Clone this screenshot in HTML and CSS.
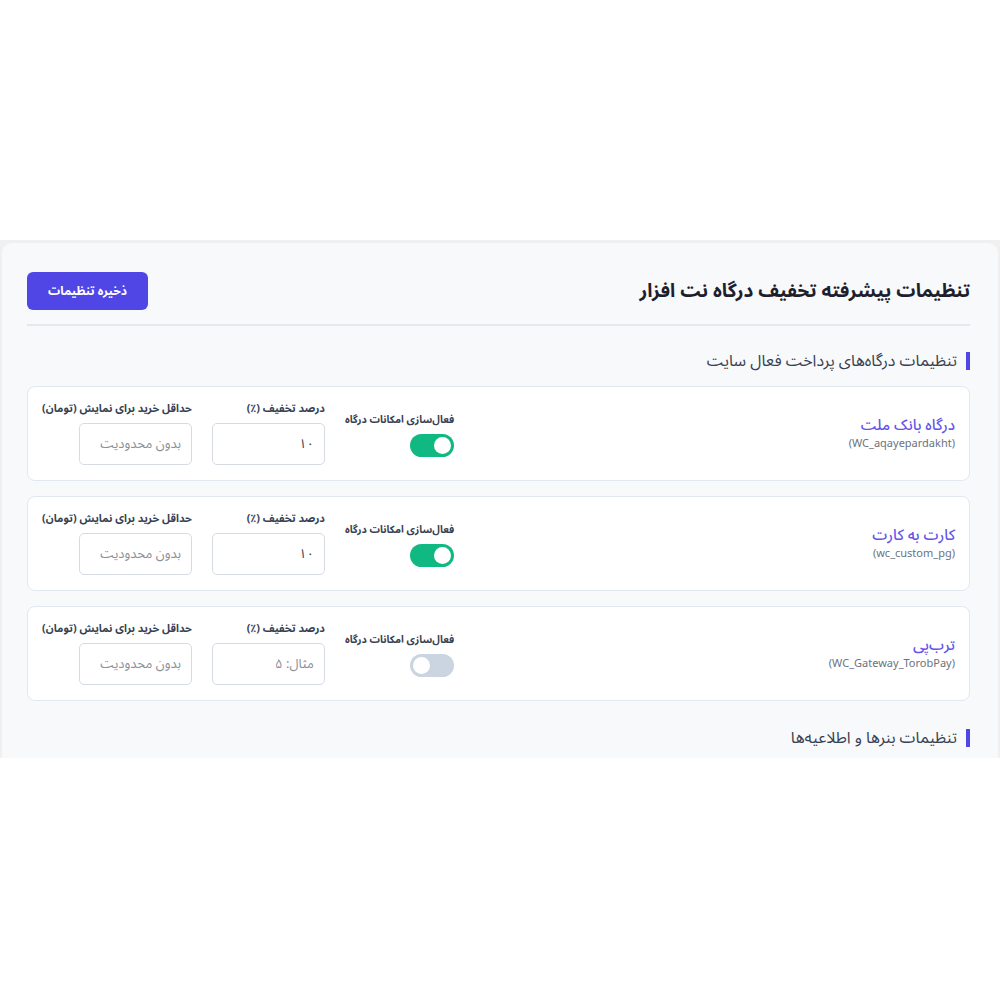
FILE: index.html
```html
<!DOCTYPE html>
<html lang="fa" dir="rtl">
  <head>
    <meta charset="UTF-8" />
    <meta name="viewport" content="width=device-width, initial-scale=1.0" />
    <title>تنظیمات پیشرفته تخفیف درگاه</title>
    <link rel="stylesheet" href="styles.css">
  </head>
  <body>
    <div class="settings-wrap">
      <div class="settings-panel">
        <div class="panel-header">
          <h1 class="panel-title">تنظیمات پیشرفته تخفیف درگاه نت افزار</h1>
          <button class="btn-save" type="button">ذخیره تنظیمات</button>
        </div>

        <h2 class="section-title">تنظیمات درگاه‌های پرداخت فعال سایت</h2>

        <div class="gateway-list">
          <div class="gateway-card">
            <div class="gateway-info">
              <div class="gateway-name">درگاه بانک ملت</div>
              <div class="gateway-id" dir="ltr">(WC_aqayepardakht)</div>
            </div>
            <div class="gateway-controls">
              <div class="toggle-field">
                <label class="field-label">فعال‌سازی امکانات درگاه</label>
                <span class="switch on"><span class="knob"></span></span>
              </div>
              <div class="field">
                <label class="field-label">درصد تخفیف (٪)</label>
                <input class="field-input" type="text" value="۱۰" />
              </div>
              <div class="field">
                <label class="field-label">حداقل خرید برای نمایش (تومان)</label>
                <input class="field-input" type="text" placeholder="بدون محدودیت" />
              </div>
            </div>
          </div>

          <div class="gateway-card">
            <div class="gateway-info">
              <div class="gateway-name">کارت به کارت</div>
              <div class="gateway-id" dir="ltr">(wc_custom_pg)</div>
            </div>
            <div class="gateway-controls">
              <div class="toggle-field">
                <label class="field-label">فعال‌سازی امکانات درگاه</label>
                <span class="switch on"><span class="knob"></span></span>
              </div>
              <div class="field">
                <label class="field-label">درصد تخفیف (٪)</label>
                <input class="field-input" type="text" value="۱۰" />
              </div>
              <div class="field">
                <label class="field-label">حداقل خرید برای نمایش (تومان)</label>
                <input class="field-input" type="text" placeholder="بدون محدودیت" />
              </div>
            </div>
          </div>

          <div class="gateway-card">
            <div class="gateway-info">
              <div class="gateway-name">ترب‌پی</div>
              <div class="gateway-id" dir="ltr">(WC_Gateway_TorobPay)</div>
            </div>
            <div class="gateway-controls">
              <div class="toggle-field">
                <label class="field-label">فعال‌سازی امکانات درگاه</label>
                <span class="switch"><span class="knob"></span></span>
              </div>
              <div class="field">
                <label class="field-label">درصد تخفیف (٪)</label>
                <input class="field-input" type="text" placeholder="مثال: ۵" />
              </div>
              <div class="field">
                <label class="field-label">حداقل خرید برای نمایش (تومان)</label>
                <input class="field-input" type="text" placeholder="بدون محدودیت" />
              </div>
            </div>
          </div>
        </div>

        <h2 class="section-title section-gap">تنظیمات بنرها و اطلاعیه‌ها</h2>
      </div>
    </div>
  </body>
</html>
```

FILE: styles.css
```css
:root {
  --primary: #4f46e5;
  --accent: #6354e8;
  --success: #10b981;
  --panel: #f8f9fb;
  --text: #1f2937;
  --muted: #6b7280;
  --border: #e2e8f0;
}

html,
body {
  margin: 0;
  padding: 0;
  background: #fff;
  font-family: "Noto Sans Arabic", "DejaVu Sans", sans-serif;
  color: var(--text);
}

.settings-wrap {
  margin-top: 240px;
  height: 518px;
  overflow: hidden;
  background: #f0f0f1;
  padding: 3px 2px 0;
  box-sizing: border-box;
}

.settings-panel {
  height: 100%;
  background: var(--panel);
  border-radius: 10px 10px 0 0;
  padding: 28px 28px 0 25px;
  box-sizing: border-box;
}

.panel-header {
  display: flex;
  align-items: center;
  justify-content: space-between;
  padding-bottom: 13px;
  border-bottom: 2px solid #e4e8ef;
}

.panel-title {
  margin: 0;
  font-size: 19px;
  font-weight: 700;
  color: #1e1e2d;
}

.btn-save {
  width: 121px;
  height: 38px;
  border: 0;
  border-radius: 6px;
  background: var(--primary);
  color: #fff;
  font-family: inherit;
  font-size: 12px;
  font-weight: 700;
}

.section-title {
  margin: 26px 0 16px;
  padding-right: 9px;
  border-right: 4px solid var(--primary);
  font-size: 16px;
  font-weight: 400;
  line-height: 18px;
  color: #374151;
}

.section-gap {
  margin-top: 28px;
}

.gateway-list {
  display: flex;
  flex-direction: column;
  gap: 15px;
}

.gateway-card {
  display: flex;
  align-items: center;
  justify-content: space-between;
  background: #fff;
  border: 1px solid var(--border);
  border-radius: 8px;
  padding: 14px 14px 15px;
}

.gateway-name {
  font-size: 15px;
  font-weight: 500;
  color: var(--accent);
  line-height: 20px;
}

.gateway-id {
  margin-top: 2px;
  font-size: 11px;
  line-height: 14px;
  color: var(--muted);
  text-align: right;
}

.gateway-controls {
  display: flex;
  align-items: center;
  gap: 20px;
}

.field,
.toggle-field {
  display: flex;
  flex-direction: column;
  align-items: flex-start;
}

.field-label {
  font-size: 10.8px;
  font-weight: 700;
  color: #374151;
  white-space: nowrap;
  line-height: 16px;
}

.field .field-label {
  margin-bottom: 6px;
}

.toggle-field {
  padding-top: 2px;
}

.toggle-field .field-label {
  font-size: 10.3px;
  margin-bottom: 6px;
}

.field-input {
  width: 113px;
  height: 42px;
  box-sizing: border-box;
  border: 1px solid #d6dbe3;
  border-radius: 5px;
  padding: 0 10px;
  font-family: inherit;
  font-size: 13px;
  color: #374151;
  background: #fff;
}

.field-input::placeholder {
  color: #8a9099;
}

.switch {
  width: 44px;
  height: 23px;
  border-radius: 12px;
  background: #cbd5e1;
  display: flex;
  align-items: center;
  padding: 0 3px;
  box-sizing: border-box;
  justify-content: flex-end;
}

.switch.on {
  background: var(--success);
  justify-content: flex-start;
}

.knob {
  width: 17px;
  height: 17px;
  border-radius: 50%;
  background: #fff;
}
```
